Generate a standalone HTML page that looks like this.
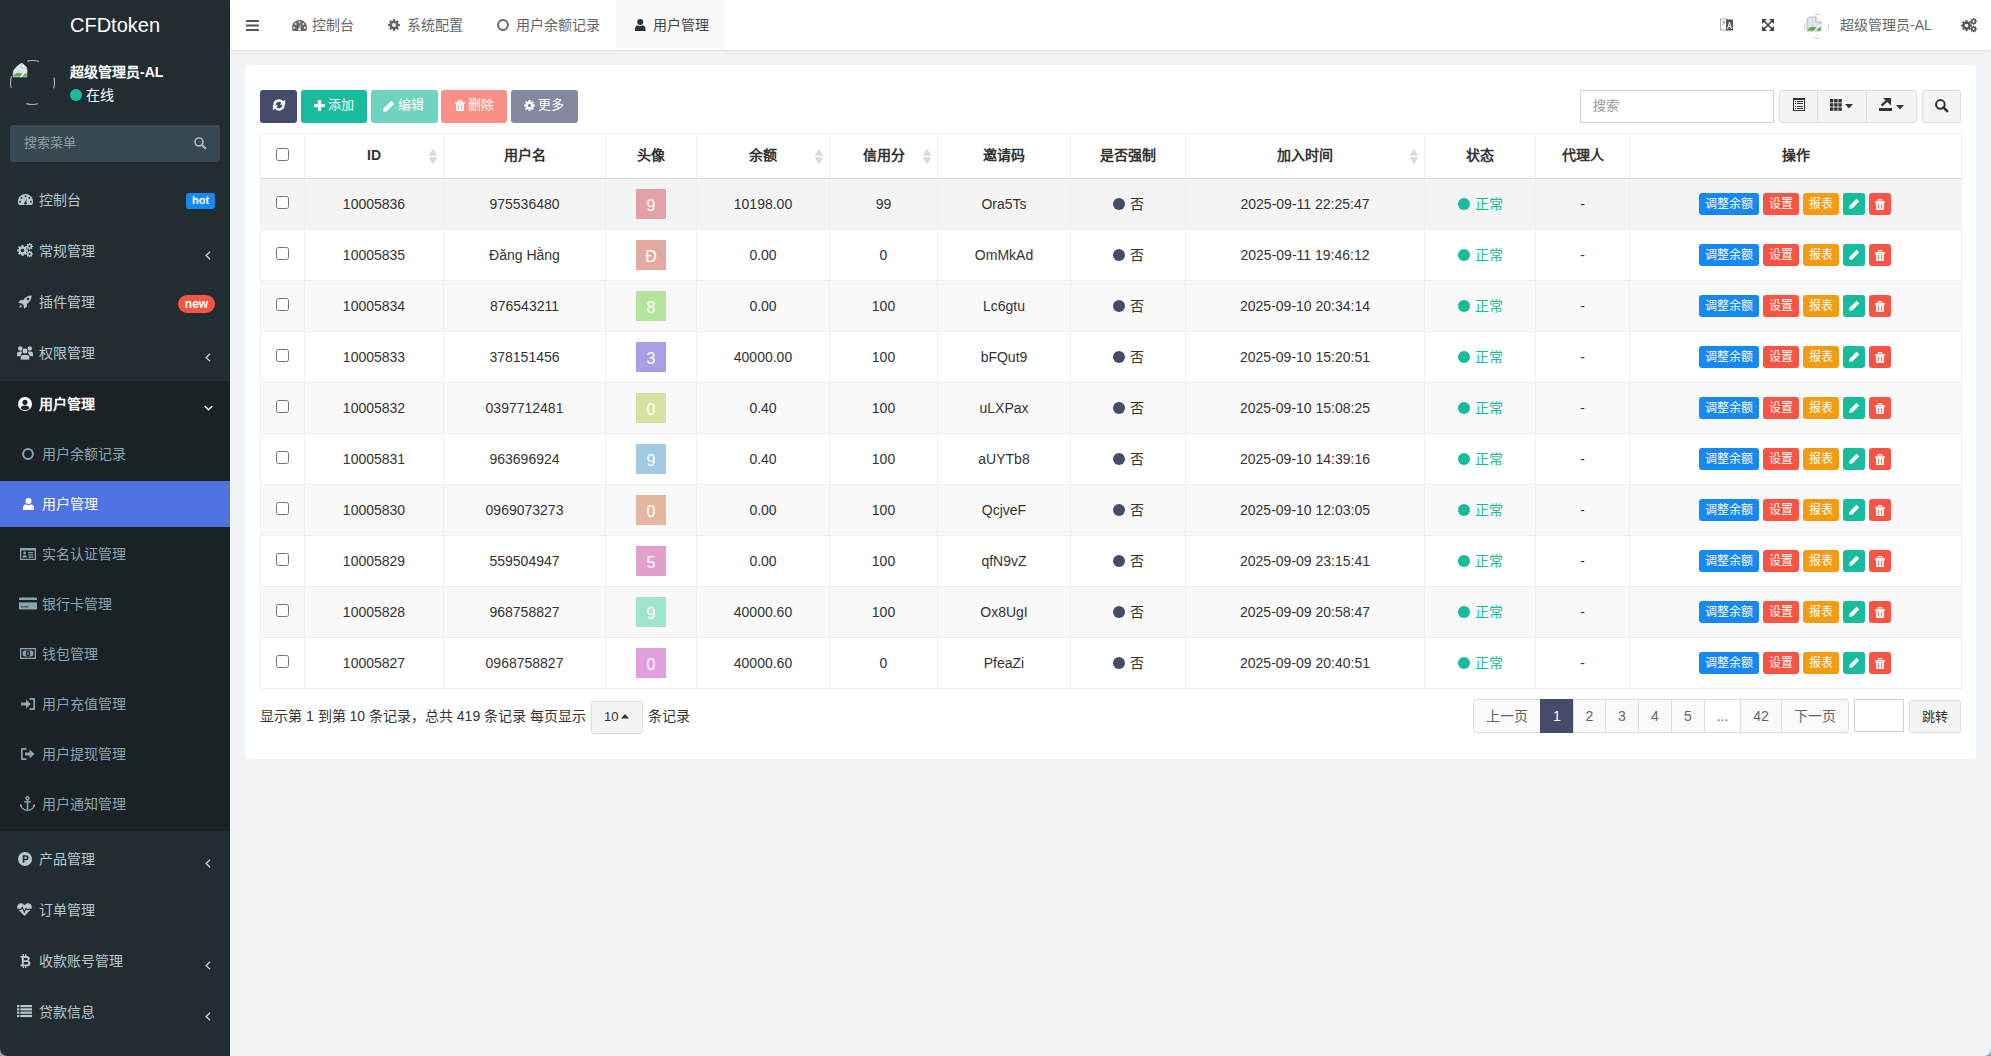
<!DOCTYPE html><html lang="zh-CN"><head><meta charset="utf-8"><title>CFDtoken</title><style>
*{box-sizing:border-box;margin:0;padding:0}
html{width:1991px;height:1056px;overflow:hidden;background:#8fa0b4}
body{position:relative;width:1991px;height:1056px;overflow:hidden;background:#f1f4f6;border-radius:0 0 7px 7px;font-family:"Liberation Sans",sans-serif;font-size:14px;color:#333}
.abs{position:absolute}
svg{display:block;overflow:visible}
#side{position:absolute;left:0;top:0;width:230px;height:1056px;background:#222d32;overflow:hidden}
.t{position:absolute;white-space:nowrap;line-height:20px;height:20px}
#nav{position:absolute;left:230px;top:0;width:1761px;height:50px;background:#fff;box-shadow:0 1px 2px rgba(0,0,0,.07)}
#panel{position:absolute;left:245px;top:65px;width:1731px;height:694px;background:#fff;border-radius:4px}
.btn{position:absolute;height:33px;border-radius:3px;color:#fff;font-size:13px;line-height:33px;white-space:nowrap}
table.tb{position:absolute;left:260px;top:133px;border-collapse:collapse;table-layout:fixed;width:1701px}
.tb th,.tb td{border:1px solid #f0f0f0;text-align:center;padding:0;white-space:nowrap;overflow:hidden;line-height:20px}
.tb th{height:45px;padding-bottom:2px;font-weight:bold;color:#333;border-bottom:1px solid #dcdcdc;position:relative}
.tb td{height:51px;color:#333}
.tb tr.odd td{background:#f9f9f9}
.tb tr.hov td{background:#f4f4f4}
.cb{display:inline-block;width:13px;height:13px;border:1px solid #767676;border-radius:2.5px;background:#fff;vertical-align:middle;position:relative;top:-3px}
.sort{position:absolute;right:6px;top:14.5px}
.av{display:inline-block;width:30px;height:30px;line-height:34px;color:#fff;font-family:"Liberation Sans",sans-serif;font-size:16px;vertical-align:middle}
.dot{display:inline-block;width:12px;height:12px;border-radius:6px;vertical-align:-1px;margin-right:5px}
.xb{position:absolute;top:0;height:22px;line-height:22px;border-radius:3px;color:#fff;font-size:12px;text-align:center}
.pg{position:absolute;top:699px;height:34px;border:1px solid #ddd;background:#fafafa;color:#666;line-height:32px;text-align:center;font-size:14px}
</style></head><body>
<div id="side">
<div class="abs" style="left:0;top:381px;width:230px;height:450px;background:#1a2226"></div>
<div class="abs" style="left:0;top:481px;width:230px;height:46px;background:#4e73df"></div>
<div class="t" style="left:0;top:15px;width:230px;text-align:center;color:#fff;font-size:20px;line-height:20px">CFDtoken</div>
<div class="abs" style="left:10px;top:60px;"><svg width="45" height="45" viewBox="0 0 45 45"><defs><clipPath id="cpa"><circle cx="22.5" cy="22.5" r="22.5"/></clipPath></defs><g clip-path="url(#cpa)"><g transform="translate(2,2)"><path d="M1,1 L10,1 L15,6 L15,15 L1,15 Z" fill="#dce5ef" stroke="#9aa5b1" stroke-width="0.7"/><path d="M1.4,14.6 C3,10.5 7,9.8 11,12.2 L12.6,10.6 L14.6,12 L14.6,14.6 Z" fill="#5aae45"/><path d="M15,8.5 L8.5,15" stroke="#fff" stroke-width="1.3"/><path d="M10,1 L10,6 L15,6" fill="#fff" stroke="#9aa5b1" stroke-width="0.7"/></g></g><circle cx="22.5" cy="22.5" r="22" fill="none" stroke="rgba(255,255,255,.65)" stroke-width="1.1" stroke-dasharray="12 22.56" stroke-dashoffset="6"/></svg></div>
<div class="t" style="left:70px;top:62px;color:#fff;font-weight:bold;font-size:14px">超级管理员-AL</div>
<div class="abs" style="left:70px;top:89px;"><div style="width:12px;height:12px;border-radius:6px;background:#18bc9c"></div></div>
<div class="t" style="left:86px;top:85px;color:#fff;font-size:14px">在线</div>
<div class="abs" style="left:10px;top:125px;width:210px;height:37px;background:#374850;border-radius:3px"></div>
<div class="t" style="left:24px;top:133px;color:#8f9ea5;font-size:13px">搜索菜单</div>
<div class="abs" style="left:194px;top:137px;"><svg width="12" height="12" viewBox="0 0 13 13" ><circle cx="5.4" cy="5.4" r="4.3" fill="none" stroke="#aab4b9" stroke-width="1.8"/><path d="M8.4,8.4 L12.2,12.2" stroke="#aab4b9" stroke-width="2.4" stroke-linecap="round"/></svg></div>
<div class="abs" style="left:18px;top:194.0px;"><svg width="15" height="11" viewBox="0 0 15 11" ><path d="M0.9,11 A7.5,7.5 0 1 1 14.1,11 Z" fill="#b8c7ce"/><circle cx="7.5" cy="2.2" r="0.95" fill="#222d32"/><circle cx="3.6" cy="3.9" r="0.95" fill="#222d32"/><circle cx="11.4" cy="3.9" r="0.95" fill="#222d32"/><circle cx="2.1" cy="7.7" r="0.95" fill="#222d32"/><circle cx="12.9" cy="7.7" r="0.95" fill="#222d32"/><path d="M8.9,3.6 L8.2,8.6 L6.9,8.4 Z" fill="#222d32"/><circle cx="7.5" cy="9.3" r="1.3" fill="#222d32"/></svg></div>
<div class="t" style="left:39px;top:189.5px;color:#b8c7ce;">控制台</div>
<div class="abs" style="left:186px;top:193px;width:29px;height:16px;border-radius:3px;background:#1688f1;color:#fff;font-size:11px;font-weight:bold;line-height:14px;text-align:center">hot</div>
<div class="abs" style="left:17px;top:243.2px;"><svg width="16" height="14.5" viewBox="0 0 16 14.5" ><path d="M9.45,6.39 L10.93,6.60 L10.93,8.40 L9.45,8.61 L9.29,9.07 L9.08,9.50 L9.97,10.70 L8.70,11.97 L7.50,11.08 L7.07,11.29 L6.61,11.45 L6.40,12.93 L4.60,12.93 L4.39,11.45 L3.93,11.29 L3.50,11.08 L2.30,11.97 L1.03,10.70 L1.92,9.50 L1.71,9.07 L1.55,8.61 L0.07,8.40 L0.07,6.60 L1.55,6.39 L1.71,5.93 L1.92,5.50 L1.03,4.30 L2.30,3.03 L3.50,3.92 L3.93,3.71 L4.39,3.55 L4.60,2.07 L6.40,2.07 L6.61,3.55 L7.07,3.71 L7.50,3.92 L8.70,3.03 L9.97,4.30 L9.08,5.50 L9.29,5.93 Z" fill="#b8c7ce"/><circle cx="5.5" cy="7.5" r="1.8" fill="#222d32"/><path d="M15.01,2.72 L15.95,2.84 L15.95,3.96 L15.01,4.08 L14.91,4.36 L14.78,4.62 L15.37,5.38 L14.58,6.17 L13.82,5.58 L13.56,5.71 L13.28,5.81 L13.16,6.75 L12.04,6.75 L11.92,5.81 L11.64,5.71 L11.38,5.58 L10.62,6.17 L9.83,5.38 L10.42,4.62 L10.29,4.36 L10.19,4.08 L9.25,3.96 L9.25,2.84 L10.19,2.72 L10.29,2.44 L10.42,2.18 L9.83,1.42 L10.62,0.63 L11.38,1.22 L11.64,1.09 L11.92,0.99 L12.04,0.05 L13.16,0.05 L13.28,0.99 L13.56,1.09 L13.82,1.22 L14.58,0.63 L15.37,1.42 L14.78,2.18 L14.91,2.44 Z" fill="#b8c7ce"/><circle cx="12.6" cy="3.4" r="1.1" fill="#222d32"/><path d="M15.01,10.32 L15.95,10.44 L15.95,11.56 L15.01,11.68 L14.91,11.96 L14.78,12.22 L15.37,12.98 L14.58,13.77 L13.82,13.18 L13.56,13.31 L13.28,13.41 L13.16,14.35 L12.04,14.35 L11.92,13.41 L11.64,13.31 L11.38,13.18 L10.62,13.77 L9.83,12.98 L10.42,12.22 L10.29,11.96 L10.19,11.68 L9.25,11.56 L9.25,10.44 L10.19,10.32 L10.29,10.04 L10.42,9.78 L9.83,9.02 L10.62,8.23 L11.38,8.82 L11.64,8.69 L11.92,8.59 L12.04,7.65 L13.16,7.65 L13.28,8.59 L13.56,8.69 L13.82,8.82 L14.58,8.23 L15.37,9.02 L14.78,9.78 L14.91,10.04 Z" fill="#b8c7ce"/><circle cx="12.6" cy="11.0" r="1.1" fill="#222d32"/></svg></div>
<div class="t" style="left:39px;top:240.5px;color:#b8c7ce;">常规管理</div>
<div class="abs" style="left:205px;top:251.3px;"><svg width="6" height="9" viewBox="0 0 6 9" ><path d="M5,0.8 L1.2,4.5 L5,8.2" fill="none" stroke="#b8c7ce" stroke-width="1.5"/></svg></div>
<div class="abs" style="left:18px;top:294.5px;"><svg width="14" height="14" viewBox="0 0 14 14" ><path d="M13.6,0.4 C10,0.3 7.2,2 5.2,5 L2.2,5.2 L0.3,8 L3.4,8.3 L5.7,10.6 L6,13.7 L8.8,11.8 L9,8.8 C12,6.8 13.7,4 13.6,0.4 Z" fill="#b8c7ce"/><circle cx="10" cy="4" r="1.3" fill="#222d32"/><path d="M2.6,9.8 L4.2,11.4 L1,13 Z" fill="#b8c7ce"/></svg></div>
<div class="t" style="left:39px;top:291.5px;color:#b8c7ce;">插件管理</div>
<div class="abs" style="left:178px;top:295px;width:37px;height:18px;border-radius:9px;background:#f75444;color:#fff;font-size:12px;font-weight:bold;line-height:18px;text-align:center">new</div>
<div class="abs" style="left:17px;top:345.5px;"><svg width="16" height="14" viewBox="0 0 16 14" ><circle cx="3.3" cy="2.5" r="2.3" fill="#b8c7ce"/><circle cx="12.7" cy="2.5" r="2.3" fill="#b8c7ce"/><path d="M0,10.2 L0,7.6 C0,6.2 1.2,5.4 3.2,5.4 L5.2,5.6 L3.6,10.2 Z" fill="#b8c7ce"/><path d="M16,10.2 L16,7.6 C16,6.2 14.8,5.4 12.8,5.4 L10.8,5.6 L12.4,10.2 Z" fill="#b8c7ce"/><path d="M3.2,14 L3.2,11 C3.2,9.2 4.8,8.4 8,8.4 C11.2,8.4 12.8,9.2 12.8,11 L12.8,14 Z" fill="#b8c7ce" stroke="#222d32" stroke-width="0.8"/><circle cx="8" cy="5" r="3" fill="#b8c7ce" stroke="#222d32" stroke-width="0.8"/></svg></div>
<div class="t" style="left:39px;top:342.5px;color:#b8c7ce;">权限管理</div>
<div class="abs" style="left:205px;top:353.3px;"><svg width="6" height="9" viewBox="0 0 6 9" ><path d="M5,0.8 L1.2,4.5 L5,8.2" fill="none" stroke="#b8c7ce" stroke-width="1.5"/></svg></div>
<div class="abs" style="left:18px;top:396.5px;"><svg width="14" height="14" viewBox="0 0 14 14" ><circle cx="7" cy="7" r="7" fill="#fff"/><circle cx="7" cy="5.3" r="2.6" fill="#1a2226"/><path d="M2.5,11.2 C3.2,9.3 5,8.6 7,8.6 C9,8.6 10.8,9.3 11.5,11.2 C10.4,12.5 8.8,13 7,13 C5.2,13 3.6,12.5 2.5,11.2 Z" fill="#1a2226"/></svg></div>
<div class="t" style="left:39px;top:393.5px;color:#fff;font-weight:bold;">用户管理</div>
<div class="abs" style="left:204px;top:404.5px;"><svg width="9" height="6" viewBox="0 0 9 6" ><path d="M0.8,1 L4.5,4.8 L8.2,1" fill="none" stroke="#fff" stroke-width="1.3"/></svg></div>
<div class="abs" style="left:22px;top:447.5px;"><svg width="12" height="12" viewBox="0 0 12 12" ><circle cx="6.0" cy="6.0" r="4.9" fill="none" stroke="#8aa4af" stroke-width="2"/></svg></div>
<div class="t" style="left:42px;top:443.5px;color:#8aa4af;">用户余额记录</div>
<div class="abs" style="left:23px;top:497.5px;"><svg width="11" height="12" viewBox="0 0 11 12" ><circle cx="5.5" cy="3" r="3" fill="#fff"/><path d="M0,12 L0,9.5 C0,7.5 1.5,6.5 3,6.3 C3.8,6.9 4.6,7.1 5.5,7.1 C6.4,7.1 7.2,6.9 8,6.3 C9.5,6.5 11,7.5 11,9.5 L11,12 Z" fill="#fff"/></svg></div>
<div class="t" style="left:42px;top:493.5px;color:#fff;">用户管理</div>
<div class="abs" style="left:20px;top:547.5px;"><svg width="16" height="12" viewBox="0 0 16 12" ><rect x="0" y="0" width="16" height="12" fill="#8aa4af"/><rect x="1.3" y="2.4" width="13.4" height="8.4" fill="#1a2226"/><circle cx="4.6" cy="5" r="1.4" fill="#8aa4af"/><path d="M2.4,9.6 C2.4,7.8 3.2,7.2 4.6,7.2 C6,7.2 6.8,7.8 6.8,9.6 Z" fill="#8aa4af"/><rect x="8.2" y="4" width="5" height="1.2" fill="#8aa4af"/><rect x="8.2" y="6.3" width="5" height="1.2" fill="#8aa4af"/><rect x="8.2" y="8.5" width="5" height="1.2" fill="#8aa4af"/></svg></div>
<div class="t" style="left:42px;top:543.5px;color:#8aa4af;">实名认证管理</div>
<div class="abs" style="left:19px;top:597.0px;"><svg width="18" height="13" viewBox="0 0 18 13" ><rect x="0" y="0.5" width="18" height="12" rx="1" fill="#8aa4af"/><rect x="0" y="3" width="18" height="2.4" fill="#1a2226"/><rect x="2" y="9.3" width="2.4" height="1" fill="#1a2226"/><rect x="5.3" y="9.3" width="3.6" height="1" fill="#1a2226"/></svg></div>
<div class="t" style="left:42px;top:593.5px;color:#8aa4af;">银行卡管理</div>
<div class="abs" style="left:20px;top:648.0px;"><svg width="16" height="11" viewBox="0 0 16 11" ><rect x="0" y="0" width="16" height="11" fill="#8aa4af"/><rect x="1.3" y="1.3" width="13.4" height="8.4" fill="#1a2226"/><rect x="2.6" y="2.4" width="10.8" height="6.2" rx="2.5" fill="#8aa4af"/><ellipse cx="8" cy="5.5" rx="2.2" ry="2.9" fill="#1a2226"/><rect x="7.5" y="3.8" width="1" height="3.4" fill="#8aa4af"/></svg></div>
<div class="t" style="left:42px;top:643.5px;color:#8aa4af;">钱包管理</div>
<div class="abs" style="left:21px;top:697.5px;"><svg width="14" height="12" viewBox="0 0 14 12" ><path d="M0,4.5 L5,4.5 L5,1.5 L9.8,6 L5,10.5 L5,7.5 L0,7.5 Z" fill="#8aa4af"/><path d="M8.5,0 L13,0 C13.6,0 14,0.4 14,1 L14,11 C14,11.6 13.6,12 13,12 L8.5,12 L8.5,10.3 L12.3,10.3 L12.3,1.7 L8.5,1.7 Z" fill="#8aa4af"/></svg></div>
<div class="t" style="left:42px;top:693.5px;color:#8aa4af;">用户充值管理</div>
<div class="abs" style="left:21px;top:747.5px;"><svg width="14" height="12" viewBox="0 0 14 12" ><path d="M5.5,0 L1,0 C0.4,0 0,0.4 0,1 L0,11 C0,11.6 0.4,12 1,12 L5.5,12 L5.5,10.3 L1.7,10.3 L1.7,1.7 L5.5,1.7 Z" fill="#8aa4af"/><path d="M4,4.5 L8.6,4.5 L8.6,1.5 L13.6,6 L8.6,10.5 L8.6,7.5 L4,7.5 Z" fill="#8aa4af"/></svg></div>
<div class="t" style="left:42px;top:743.5px;color:#8aa4af;">用户提现管理</div>
<div class="abs" style="left:20px;top:796.0px;"><svg width="15" height="15" viewBox="0 0 15 15" ><circle cx="7.5" cy="2.2" r="1.5" fill="none" stroke="#8aa4af" stroke-width="1.4"/><rect x="6.8" y="3.6" width="1.5" height="10" fill="#8aa4af"/><rect x="4.2" y="5.2" width="6.6" height="1.4" fill="#8aa4af"/><path d="M0.7,8.6 C1,12 4,14.3 7.5,14.3 C11,14.3 14,12 14.3,8.6" fill="none" stroke="#8aa4af" stroke-width="1.5"/><path d="M0,8 L2.6,9.8 L0.2,11 Z" fill="#8aa4af"/><path d="M15,8 L12.4,9.8 L14.8,11 Z" fill="#8aa4af"/></svg></div>
<div class="t" style="left:42px;top:793.5px;color:#8aa4af;">用户通知管理</div>
<div class="abs" style="left:18px;top:851.5px;"><svg width="14" height="14" viewBox="0 0 14 14" ><circle cx="7" cy="7" r="7" fill="#b8c7ce"/><path d="M4.7,3.3 L8,3.3 C9.7,3.3 10.6,4.4 10.6,5.8 C10.6,7.2 9.7,8.3 8,8.3 L6.4,8.3 L6.4,10.8 L4.7,10.8 Z M6.4,4.8 L6.4,6.8 L7.9,6.8 C8.5,6.8 8.9,6.4 8.9,5.8 C8.9,5.2 8.5,4.8 7.9,4.8 Z" fill="#222d32"/></svg></div>
<div class="t" style="left:39px;top:848.5px;color:#b8c7ce;">产品管理</div>
<div class="abs" style="left:205px;top:859.3px;"><svg width="6" height="9" viewBox="0 0 6 9" ><path d="M5,0.8 L1.2,4.5 L5,8.2" fill="none" stroke="#b8c7ce" stroke-width="1.5"/></svg></div>
<div class="abs" style="left:17px;top:903.0px;"><svg width="15" height="13" viewBox="0 0 15 13" ><path d="M7.5,13 L1.2,6.6 C-0.6,4.6 0,1.2 2.8,0.4 C4.6,-0.1 6.4,0.8 7.5,2.2 C8.6,0.8 10.4,-0.1 12.2,0.4 C15,1.2 15.6,4.6 13.8,6.6 Z" fill="#b8c7ce"/><path d="M0.5,6.4 L4,6.4 L5.3,4.4 L7.3,9 L9,5.4 L10,6.4 L14.5,6.4" fill="none" stroke="#222d32" stroke-width="1.1"/></svg></div>
<div class="t" style="left:39px;top:899.5px;color:#b8c7ce;">订单管理</div>
<div class="abs" style="left:20px;top:953.5px;"><svg width="11" height="14" viewBox="0 0 11 14" ><path d="M0.5,2 L6.5,2 C8.6,2 9.8,3 9.8,4.6 C9.8,5.7 9.2,6.4 8.3,6.8 C9.6,7.1 10.5,8 10.5,9.4 C10.5,11.2 9.2,12.3 6.8,12.3 L0.5,12.3 L0.5,10.5 L1.8,10.5 L1.8,3.8 L0.5,3.8 Z M3.8,3.9 L3.8,6.2 L6.2,6.2 C7.1,6.2 7.7,5.8 7.7,5 C7.7,4.3 7.1,3.9 6.2,3.9 Z M3.8,7.9 L3.8,10.4 L6.5,10.4 C7.6,10.4 8.2,9.9 8.2,9.1 C8.2,8.3 7.6,7.9 6.5,7.9 Z" fill="#b8c7ce"/><rect x="2.6" y="0" width="1.3" height="2.2" fill="#b8c7ce"/><rect x="5.1" y="0" width="1.3" height="2.2" fill="#b8c7ce"/><rect x="2.6" y="12" width="1.3" height="2" fill="#b8c7ce"/><rect x="5.1" y="12" width="1.3" height="2" fill="#b8c7ce"/></svg></div>
<div class="t" style="left:39px;top:950.5px;color:#b8c7ce;">收款账号管理</div>
<div class="abs" style="left:205px;top:961.3px;"><svg width="6" height="9" viewBox="0 0 6 9" ><path d="M5,0.8 L1.2,4.5 L5,8.2" fill="none" stroke="#b8c7ce" stroke-width="1.5"/></svg></div>
<div class="abs" style="left:17px;top:1005.4px;"><svg width="15" height="12.2" viewBox="0 0 15 12.2" ><rect x="0" y="0" width="2.4" height="2.2" fill="#b8c7ce"/><rect x="3.4" y="0" width="11.6" height="2.2" fill="#b8c7ce"/><rect x="0" y="3.3" width="2.4" height="2.2" fill="#b8c7ce"/><rect x="3.4" y="3.3" width="11.6" height="2.2" fill="#b8c7ce"/><rect x="0" y="6.6" width="2.4" height="2.2" fill="#b8c7ce"/><rect x="3.4" y="6.6" width="11.6" height="2.2" fill="#b8c7ce"/><rect x="0" y="9.9" width="2.4" height="2.2" fill="#b8c7ce"/><rect x="3.4" y="9.9" width="11.6" height="2.2" fill="#b8c7ce"/></svg></div>
<div class="t" style="left:39px;top:1001.5px;color:#b8c7ce;">贷款信息</div>
<div class="abs" style="left:205px;top:1012.3px;"><svg width="6" height="9" viewBox="0 0 6 9" ><path d="M5,0.8 L1.2,4.5 L5,8.2" fill="none" stroke="#b8c7ce" stroke-width="1.5"/></svg></div>
</div>
<div id="nav"></div>
<div class="abs" style="left:616px;top:0;width:109px;height:50px;background:#f9f9f9"></div>
<div class="abs" style="left:246px;top:20px;"><svg width="13" height="11" viewBox="0 0 13 11" ><rect x="0" y="0" width="13" height="2" rx="0.5" fill="#555"/><rect x="0" y="4.5" width="13" height="2" rx="0.5" fill="#555"/><rect x="0" y="9" width="13" height="2" rx="0.5" fill="#555"/></svg></div>
<div class="abs" style="left:292px;top:19.8px;"><svg width="15" height="11" viewBox="0 0 15 11" ><path d="M0.9,11 A7.5,7.5 0 1 1 14.1,11 Z" fill="#666"/><circle cx="7.5" cy="2.2" r="0.95" fill="#fff"/><circle cx="3.6" cy="3.9" r="0.95" fill="#fff"/><circle cx="11.4" cy="3.9" r="0.95" fill="#fff"/><circle cx="2.1" cy="7.7" r="0.95" fill="#fff"/><circle cx="12.9" cy="7.7" r="0.95" fill="#fff"/><path d="M8.9,3.6 L8.2,8.6 L6.9,8.4 Z" fill="#fff"/><circle cx="7.5" cy="9.3" r="1.3" fill="#fff"/></svg></div>
<div class="t" style="left:312px;top:15px;color:#666">控制台</div>
<div class="abs" style="left:388px;top:19px;"><svg width="12" height="12" viewBox="0 0 12 12" ><path d="M10.23,4.81 L11.92,5.01 L11.92,6.99 L10.23,7.19 L10.07,7.68 L9.84,8.15 L10.88,9.49 L9.49,10.88 L8.15,9.84 L7.68,10.07 L7.19,10.23 L6.99,11.92 L5.01,11.92 L4.81,10.23 L4.32,10.07 L3.85,9.84 L2.51,10.88 L1.12,9.49 L2.16,8.15 L1.93,7.68 L1.77,7.19 L0.08,6.99 L0.08,5.01 L1.77,4.81 L1.93,4.32 L2.16,3.85 L1.12,2.51 L2.51,1.12 L3.85,2.16 L4.32,1.93 L4.81,1.77 L5.01,0.08 L6.99,0.08 L7.19,1.77 L7.68,1.93 L8.15,2.16 L9.49,1.12 L10.88,2.51 L9.84,3.85 L10.07,4.32 Z" fill="#666"/><circle cx="6" cy="6" r="1.9" fill="#fff"/></svg></div>
<div class="t" style="left:407px;top:15px;color:#666">系统配置</div>
<div class="abs" style="left:497px;top:19px;"><svg width="12" height="12" viewBox="0 0 12 12" ><circle cx="6.0" cy="6.0" r="4.9" fill="none" stroke="#666" stroke-width="2"/></svg></div>
<div class="t" style="left:516px;top:15px;color:#666">用户余额记录</div>
<div class="abs" style="left:635px;top:19px;"><svg width="10.5" height="12" viewBox="0 0 10.5 12" ><circle cx="5.25" cy="3" r="3" fill="#333"/><path d="M0,12 L0,9.5 C0,7.5 1.5,6.5 3,6.3 C3.7,6.9 4.4,7.1 5.25,7.1 C6.1,7.1 6.8,6.9 7.5,6.3 C9,6.5 10.5,7.5 10.5,9.5 L10.5,12 Z" fill="#333"/></svg></div>
<div class="t" style="left:653px;top:15px;color:#444">用户管理</div>
<div class="abs" style="left:1720px;top:18px;"><svg width="13" height="13" viewBox="0 0 13 13" ><rect x="0.5" y="1" width="6.5" height="11" fill="#fff" stroke="#999" stroke-width="0.8"/><path d="M2,4 L5,4 M3.5,3 L3.5,4 M2.2,7 L5,4.5" stroke="#777" stroke-width="0.8" fill="none"/><rect x="6" y="1.5" width="7" height="11" fill="#555"/><path d="M7.5,11 L9.5,4 L11.5,11 M8.3,8.5 L10.7,8.5" stroke="#fff" stroke-width="1" fill="none"/></svg></div>
<div class="abs" style="left:1762px;top:19px;"><svg width="12" height="12" viewBox="0 0 12 12" ><path d="M0,0 L5,0 L0,5 Z M12,0 L7,0 L12,5 Z M0,12 L5,12 L0,7 Z M12,12 L7,12 L12,7 Z" fill="#444"/><path d="M1.5,1.5 L10.5,10.5 M10.5,1.5 L1.5,10.5" stroke="#444" stroke-width="1.7"/></svg></div>
<div class="abs" style="left:1804px;top:14px;"><svg width="25" height="25" viewBox="0 0 25 25"><defs><clipPath id="cpb"><circle cx="12.5" cy="12.5" r="12.5"/></clipPath></defs><g clip-path="url(#cpb)"><g transform="translate(2,2)"><path d="M1,1 L10,1 L15,6 L15,15 L1,15 Z" fill="#dce5ef" stroke="#9aa5b1" stroke-width="0.7"/><path d="M1.4,14.6 C3,10.5 7,9.8 11,12.2 L12.6,10.6 L14.6,12 L14.6,14.6 Z" fill="#5aae45"/><path d="M15,8.5 L8.5,15" stroke="#fff" stroke-width="1.3"/><path d="M10,1 L10,6 L15,6" fill="#fff" stroke="#9aa5b1" stroke-width="0.7"/></g></g><circle cx="12.5" cy="12.5" r="12" fill="none" stroke="#c8c8c8" stroke-width="1" stroke-dasharray="6 12.85" stroke-dashoffset="3"/></svg></div>
<div class="t" style="left:1840px;top:15px;color:#666">超级管理员-AL</div>
<div class="abs" style="left:1961px;top:18px;"><svg width="16" height="14.5" viewBox="0 0 16 14.5" ><path d="M9.45,6.39 L10.93,6.60 L10.93,8.40 L9.45,8.61 L9.29,9.07 L9.08,9.50 L9.97,10.70 L8.70,11.97 L7.50,11.08 L7.07,11.29 L6.61,11.45 L6.40,12.93 L4.60,12.93 L4.39,11.45 L3.93,11.29 L3.50,11.08 L2.30,11.97 L1.03,10.70 L1.92,9.50 L1.71,9.07 L1.55,8.61 L0.07,8.40 L0.07,6.60 L1.55,6.39 L1.71,5.93 L1.92,5.50 L1.03,4.30 L2.30,3.03 L3.50,3.92 L3.93,3.71 L4.39,3.55 L4.60,2.07 L6.40,2.07 L6.61,3.55 L7.07,3.71 L7.50,3.92 L8.70,3.03 L9.97,4.30 L9.08,5.50 L9.29,5.93 Z" fill="#555"/><circle cx="5.5" cy="7.5" r="1.8" fill="#fff"/><path d="M15.01,2.72 L15.95,2.84 L15.95,3.96 L15.01,4.08 L14.91,4.36 L14.78,4.62 L15.37,5.38 L14.58,6.17 L13.82,5.58 L13.56,5.71 L13.28,5.81 L13.16,6.75 L12.04,6.75 L11.92,5.81 L11.64,5.71 L11.38,5.58 L10.62,6.17 L9.83,5.38 L10.42,4.62 L10.29,4.36 L10.19,4.08 L9.25,3.96 L9.25,2.84 L10.19,2.72 L10.29,2.44 L10.42,2.18 L9.83,1.42 L10.62,0.63 L11.38,1.22 L11.64,1.09 L11.92,0.99 L12.04,0.05 L13.16,0.05 L13.28,0.99 L13.56,1.09 L13.82,1.22 L14.58,0.63 L15.37,1.42 L14.78,2.18 L14.91,2.44 Z" fill="#555"/><circle cx="12.6" cy="3.4" r="1.1" fill="#fff"/><path d="M15.01,10.32 L15.95,10.44 L15.95,11.56 L15.01,11.68 L14.91,11.96 L14.78,12.22 L15.37,12.98 L14.58,13.77 L13.82,13.18 L13.56,13.31 L13.28,13.41 L13.16,14.35 L12.04,14.35 L11.92,13.41 L11.64,13.31 L11.38,13.18 L10.62,13.77 L9.83,12.98 L10.42,12.22 L10.29,11.96 L10.19,11.68 L9.25,11.56 L9.25,10.44 L10.19,10.32 L10.29,10.04 L10.42,9.78 L9.83,9.02 L10.62,8.23 L11.38,8.82 L11.64,8.69 L11.92,8.59 L12.04,7.65 L13.16,7.65 L13.28,8.59 L13.56,8.69 L13.82,8.82 L14.58,8.23 L15.37,9.02 L14.78,9.78 L14.91,10.04 Z" fill="#555"/><circle cx="12.6" cy="11.0" r="1.1" fill="#fff"/></svg></div>
<div id="panel"></div>
<div class="btn" style="left:260px;top:90px;width:37px;background:#444c69"><div class="abs" style="left:12.5px;top:9px;"><svg width="12" height="12" viewBox="0 0 12 12" ><path d="M1.5,6.2 A4.5,4.5 0 0 1 9.9,3.8" fill="none" stroke="#fff" stroke-width="2.3"/><path d="M12.1,0.6 L12.1,5.8 L6.9,5.8 Z" fill="#fff"/><path d="M10.5,5.8 A4.5,4.5 0 0 1 2.1,8.2" fill="none" stroke="#fff" stroke-width="2.3"/><path d="M-0.1,11.4 L-0.1,6.2 L5.1,6.2 Z" fill="#fff"/></svg></div></div>
<div class="btn" style="left:301px;top:90px;width:66px;background:#18bc9c"><div class="abs" style="left:13px;top:9.8px;"><svg width="11" height="11" viewBox="0 0 11 11" ><rect x="3.9" y="0" width="3.2" height="11" fill="#fff"/><rect x="0" y="3.9" width="11" height="3.2" fill="#fff"/></svg></div><span class="t" style="left:27px;top:5.3px;font-size:13px">添加</span></div>
<div class="btn" style="left:371px;top:90px;width:67px;background:#6ed4bf"><div class="abs" style="left:12px;top:9.8px;"><svg width="12" height="12" viewBox="0 0 12 12" ><path d="M0.2,11.8 L0.6,8.4 L8.2,0.8 L11.2,3.8 L3.6,11.4 Z" fill="#fff"/></svg></div><span class="t" style="left:27px;top:5.3px;font-size:13px">编辑</span></div>
<div class="btn" style="left:441px;top:90px;width:66px;background:#f98f85"><div class="abs" style="left:13.5px;top:9.5px;"><svg width="10" height="11" viewBox="0 0 10 11" ><rect x="0" y="2.2" width="10" height="1.5" fill="#fff"/><path d="M3,2.4 L3.4,0.6 L6.6,0.6 L7,2.4" fill="none" stroke="#fff" stroke-width="1.1"/><path d="M0.9,3.5 L9.1,3.5 L8.8,11 L1.2,11 Z" fill="#fff"/><rect x="3" y="4.7" width="0.8" height="5.2" fill="#f98f85"/><rect x="6.2" y="4.7" width="0.8" height="5.2" fill="#f98f85"/></svg></div><span class="t" style="left:27px;top:5.3px;font-size:13px">删除</span></div>
<div class="btn" style="left:511px;top:90px;width:67px;background:#8489a0"><div class="abs" style="left:13px;top:10px;"><svg width="11" height="11" viewBox="0 0 11 11" ><path d="M9.35,4.41 L10.93,4.60 L10.93,6.40 L9.35,6.59 L9.20,7.03 L8.99,7.45 L9.97,8.70 L8.70,9.97 L7.45,8.99 L7.03,9.20 L6.59,9.35 L6.40,10.93 L4.60,10.93 L4.41,9.35 L3.97,9.20 L3.55,8.99 L2.30,9.97 L1.03,8.70 L2.01,7.45 L1.80,7.03 L1.65,6.59 L0.07,6.40 L0.07,4.60 L1.65,4.41 L1.80,3.97 L2.01,3.55 L1.03,2.30 L2.30,1.03 L3.55,2.01 L3.97,1.80 L4.41,1.65 L4.60,0.07 L6.40,0.07 L6.59,1.65 L7.03,1.80 L7.45,2.01 L8.70,1.03 L9.97,2.30 L8.99,3.55 L9.20,3.97 Z" fill="#fff"/><circle cx="5.5" cy="5.5" r="1.7" fill="#8489a0"/></svg></div><span class="t" style="left:27px;top:5.3px;font-size:13px">更多</span></div>
<div class="abs" style="left:1580px;top:90px;width:194px;height:33px;border:1px solid #ccd3dd;background:#fff"></div>
<div class="t" style="left:1593px;top:96px;color:#999;font-size:13px">搜索</div>
<div class="abs" style="left:1779px;top:90px;width:138px;height:33px;border:1px solid #ddd;border-radius:3px;background:#f4f4f4"></div>
<div class="abs" style="left:1817px;top:90px;width:1px;height:33px;background:#ddd"></div>
<div class="abs" style="left:1866px;top:90px;width:1px;height:33px;background:#ddd"></div>
<div class="abs" style="left:1922px;top:90px;width:39px;height:33px;border:1px solid #ddd;border-radius:3px;background:#f4f4f4"></div>
<div class="abs" style="left:1793px;top:98px;"><svg width="12" height="13" viewBox="0 0 12 13" ><rect x="0.5" y="0.5" width="11" height="12" fill="none" stroke="#333" stroke-width="1"/><rect x="0" y="0" width="12" height="2" fill="#333"/><rect x="2" y="3" width="1" height="1" fill="#333"/><rect x="4" y="3" width="6" height="1" fill="#333"/><rect x="2" y="5" width="1" height="1" fill="#333"/><rect x="4" y="5" width="6" height="1" fill="#333"/><rect x="2" y="8" width="1" height="1" fill="#333"/><rect x="4" y="8" width="6" height="1" fill="#333"/><rect x="2" y="10" width="1" height="1" fill="#333"/><rect x="4" y="10" width="6" height="1" fill="#333"/></svg></div>
<div class="abs" style="left:1830px;top:99px;"><svg width="12" height="12" viewBox="0 0 12 12" ><rect x="0" y="0" width="3.4" height="3.4" fill="#333"/><rect x="0" y="4.2" width="3.4" height="3.4" fill="#333"/><rect x="0" y="8.4" width="3.4" height="3.4" fill="#333"/><rect x="4.2" y="0" width="3.4" height="3.4" fill="#333"/><rect x="4.2" y="4.2" width="3.4" height="3.4" fill="#333"/><rect x="4.2" y="8.4" width="3.4" height="3.4" fill="#333"/><rect x="8.4" y="0" width="3.4" height="3.4" fill="#333"/><rect x="8.4" y="4.2" width="3.4" height="3.4" fill="#333"/><rect x="8.4" y="8.4" width="3.4" height="3.4" fill="#333"/></svg></div>
<div class="abs" style="left:1845px;top:104px;"><svg width="9" height="5" viewBox="0 0 9 5" ><path d="M0,0 L8,0 L4,4.5 Z" fill="#333"/></svg></div>
<div class="abs" style="left:1879px;top:98px;"><svg width="13" height="13" viewBox="0 0 13 13" ><rect x="0" y="10" width="13" height="3" fill="#333"/><path d="M4,0 L12,0 L12,7.5 Z" fill="#333"/><path d="M2.6,7.6 L9,1.6" stroke="#333" stroke-width="2.2"/></svg></div>
<div class="abs" style="left:1896px;top:105px;"><svg width="9" height="5" viewBox="0 0 9 5" ><path d="M0,0 L8,0 L4,4.5 Z" fill="#333"/></svg></div>
<div class="abs" style="left:1935px;top:99px;"><svg width="13" height="13" viewBox="0 0 13 13" ><circle cx="5.4" cy="5.4" r="4.3" fill="none" stroke="#333" stroke-width="2"/><path d="M8.4,8.4 L12.2,12.2" stroke="#333" stroke-width="2.6" stroke-linecap="round"/></svg></div>
<table class="tb"><colgroup><col style="width:44px"><col style="width:139px"><col style="width:162px"><col style="width:91px"><col style="width:133px"><col style="width:108px"><col style="width:133px"><col style="width:115px"><col style="width:239px"><col style="width:111px"><col style="width:94px"><col style="width:332px"></colgroup>
<tr><th><span class="cb" style="top:-2px"></span></th><th>ID<div class="sort"><svg width="8" height="15" viewBox="0 0 8 15" ><path d="M4,-0.3 L8.3,6.8 L-0.3,6.8 Z" fill="#dadada"/><path d="M-0.3,8.2 L8.3,8.2 L4,15.3 Z" fill="#dadada"/></svg></div></th><th>用户名</th><th>头像</th><th>余额<div class="sort"><svg width="8" height="15" viewBox="0 0 8 15" ><path d="M4,-0.3 L8.3,6.8 L-0.3,6.8 Z" fill="#dadada"/><path d="M-0.3,8.2 L8.3,8.2 L4,15.3 Z" fill="#dadada"/></svg></div></th><th>信用分<div class="sort"><svg width="8" height="15" viewBox="0 0 8 15" ><path d="M4,-0.3 L8.3,6.8 L-0.3,6.8 Z" fill="#dadada"/><path d="M-0.3,8.2 L8.3,8.2 L4,15.3 Z" fill="#dadada"/></svg></div></th><th>邀请码</th><th>是否强制</th><th>加入时间<div class="sort"><svg width="8" height="15" viewBox="0 0 8 15" ><path d="M4,-0.3 L8.3,6.8 L-0.3,6.8 Z" fill="#dadada"/><path d="M-0.3,8.2 L8.3,8.2 L4,15.3 Z" fill="#dadada"/></svg></div></th><th>状态</th><th>代理人</th><th>操作</th></tr>
<tr class="hov"><td><span class="cb"></span></td><td>10005836</td><td>975536480</td><td><span class="av" style="background:#e4a0a6">9</span></td><td>10198.00</td><td>99</td><td>Ora5Ts</td><td><span class="dot" style="background:#444c69"></span>否</td><td>2025-09-11 22:25:47</td><td><span class="dot" style="background:#18bc9c"></span><span style="color:#18bc9c">正常</span></td><td>-</td><td><div style="position:relative;height:22px;width:192px;margin-left:69px"><div class="xb" style="left:0;width:60px;background:#1688f1">调整余额</div><div class="xb" style="left:64px;width:36px;background:#f75444">设置</div><div class="xb" style="left:104px;width:36px;background:#f39c12">报表</div><div class="xb" style="left:144px;width:22px;background:#18bc9c"><div class="abs" style="left:5.5px;top:5.3px;"><svg width="11" height="11" viewBox="0 0 12 12" ><path d="M0.2,11.8 L0.6,8.4 L8.2,0.8 L11.2,3.8 L3.6,11.4 Z" fill="#fff"/></svg></div></div><div class="xb" style="left:170px;width:22px;background:#f75444"><div class="abs" style="left:6px;top:5.5px;"><svg width="10" height="11" viewBox="0 0 10 11" ><rect x="0" y="2.2" width="10" height="1.5" fill="#fff"/><path d="M3,2.4 L3.4,0.6 L6.6,0.6 L7,2.4" fill="none" stroke="#fff" stroke-width="1.1"/><path d="M0.9,3.5 L9.1,3.5 L8.8,11 L1.2,11 Z" fill="#fff"/><rect x="3" y="4.7" width="0.8" height="5.2" fill="#f75444"/><rect x="6.2" y="4.7" width="0.8" height="5.2" fill="#f75444"/></svg></div></div></div></td></tr>
<tr class=""><td><span class="cb"></span></td><td>10005835</td><td>Đăng Hằng</td><td><span class="av" style="background:#e3aa9f">Đ</span></td><td>0.00</td><td>0</td><td>OmMkAd</td><td><span class="dot" style="background:#444c69"></span>否</td><td>2025-09-11 19:46:12</td><td><span class="dot" style="background:#18bc9c"></span><span style="color:#18bc9c">正常</span></td><td>-</td><td><div style="position:relative;height:22px;width:192px;margin-left:69px"><div class="xb" style="left:0;width:60px;background:#1688f1">调整余额</div><div class="xb" style="left:64px;width:36px;background:#f75444">设置</div><div class="xb" style="left:104px;width:36px;background:#f39c12">报表</div><div class="xb" style="left:144px;width:22px;background:#18bc9c"><div class="abs" style="left:5.5px;top:5.3px;"><svg width="11" height="11" viewBox="0 0 12 12" ><path d="M0.2,11.8 L0.6,8.4 L8.2,0.8 L11.2,3.8 L3.6,11.4 Z" fill="#fff"/></svg></div></div><div class="xb" style="left:170px;width:22px;background:#f75444"><div class="abs" style="left:6px;top:5.5px;"><svg width="10" height="11" viewBox="0 0 10 11" ><rect x="0" y="2.2" width="10" height="1.5" fill="#fff"/><path d="M3,2.4 L3.4,0.6 L6.6,0.6 L7,2.4" fill="none" stroke="#fff" stroke-width="1.1"/><path d="M0.9,3.5 L9.1,3.5 L8.8,11 L1.2,11 Z" fill="#fff"/><rect x="3" y="4.7" width="0.8" height="5.2" fill="#f75444"/><rect x="6.2" y="4.7" width="0.8" height="5.2" fill="#f75444"/></svg></div></div></div></td></tr>
<tr class="odd"><td><span class="cb"></span></td><td>10005834</td><td>876543211</td><td><span class="av" style="background:#b5e3a0">8</span></td><td>0.00</td><td>100</td><td>Lc6gtu</td><td><span class="dot" style="background:#444c69"></span>否</td><td>2025-09-10 20:34:14</td><td><span class="dot" style="background:#18bc9c"></span><span style="color:#18bc9c">正常</span></td><td>-</td><td><div style="position:relative;height:22px;width:192px;margin-left:69px"><div class="xb" style="left:0;width:60px;background:#1688f1">调整余额</div><div class="xb" style="left:64px;width:36px;background:#f75444">设置</div><div class="xb" style="left:104px;width:36px;background:#f39c12">报表</div><div class="xb" style="left:144px;width:22px;background:#18bc9c"><div class="abs" style="left:5.5px;top:5.3px;"><svg width="11" height="11" viewBox="0 0 12 12" ><path d="M0.2,11.8 L0.6,8.4 L8.2,0.8 L11.2,3.8 L3.6,11.4 Z" fill="#fff"/></svg></div></div><div class="xb" style="left:170px;width:22px;background:#f75444"><div class="abs" style="left:6px;top:5.5px;"><svg width="10" height="11" viewBox="0 0 10 11" ><rect x="0" y="2.2" width="10" height="1.5" fill="#fff"/><path d="M3,2.4 L3.4,0.6 L6.6,0.6 L7,2.4" fill="none" stroke="#fff" stroke-width="1.1"/><path d="M0.9,3.5 L9.1,3.5 L8.8,11 L1.2,11 Z" fill="#fff"/><rect x="3" y="4.7" width="0.8" height="5.2" fill="#f75444"/><rect x="6.2" y="4.7" width="0.8" height="5.2" fill="#f75444"/></svg></div></div></div></td></tr>
<tr class=""><td><span class="cb"></span></td><td>10005833</td><td>378151456</td><td><span class="av" style="background:#a9a0e3">3</span></td><td>40000.00</td><td>100</td><td>bFQut9</td><td><span class="dot" style="background:#444c69"></span>否</td><td>2025-09-10 15:20:51</td><td><span class="dot" style="background:#18bc9c"></span><span style="color:#18bc9c">正常</span></td><td>-</td><td><div style="position:relative;height:22px;width:192px;margin-left:69px"><div class="xb" style="left:0;width:60px;background:#1688f1">调整余额</div><div class="xb" style="left:64px;width:36px;background:#f75444">设置</div><div class="xb" style="left:104px;width:36px;background:#f39c12">报表</div><div class="xb" style="left:144px;width:22px;background:#18bc9c"><div class="abs" style="left:5.5px;top:5.3px;"><svg width="11" height="11" viewBox="0 0 12 12" ><path d="M0.2,11.8 L0.6,8.4 L8.2,0.8 L11.2,3.8 L3.6,11.4 Z" fill="#fff"/></svg></div></div><div class="xb" style="left:170px;width:22px;background:#f75444"><div class="abs" style="left:6px;top:5.5px;"><svg width="10" height="11" viewBox="0 0 10 11" ><rect x="0" y="2.2" width="10" height="1.5" fill="#fff"/><path d="M3,2.4 L3.4,0.6 L6.6,0.6 L7,2.4" fill="none" stroke="#fff" stroke-width="1.1"/><path d="M0.9,3.5 L9.1,3.5 L8.8,11 L1.2,11 Z" fill="#fff"/><rect x="3" y="4.7" width="0.8" height="5.2" fill="#f75444"/><rect x="6.2" y="4.7" width="0.8" height="5.2" fill="#f75444"/></svg></div></div></div></td></tr>
<tr class="odd"><td><span class="cb"></span></td><td>10005832</td><td>0397712481</td><td><span class="av" style="background:#d6e3a0">0</span></td><td>0.40</td><td>100</td><td>uLXPax</td><td><span class="dot" style="background:#444c69"></span>否</td><td>2025-09-10 15:08:25</td><td><span class="dot" style="background:#18bc9c"></span><span style="color:#18bc9c">正常</span></td><td>-</td><td><div style="position:relative;height:22px;width:192px;margin-left:69px"><div class="xb" style="left:0;width:60px;background:#1688f1">调整余额</div><div class="xb" style="left:64px;width:36px;background:#f75444">设置</div><div class="xb" style="left:104px;width:36px;background:#f39c12">报表</div><div class="xb" style="left:144px;width:22px;background:#18bc9c"><div class="abs" style="left:5.5px;top:5.3px;"><svg width="11" height="11" viewBox="0 0 12 12" ><path d="M0.2,11.8 L0.6,8.4 L8.2,0.8 L11.2,3.8 L3.6,11.4 Z" fill="#fff"/></svg></div></div><div class="xb" style="left:170px;width:22px;background:#f75444"><div class="abs" style="left:6px;top:5.5px;"><svg width="10" height="11" viewBox="0 0 10 11" ><rect x="0" y="2.2" width="10" height="1.5" fill="#fff"/><path d="M3,2.4 L3.4,0.6 L6.6,0.6 L7,2.4" fill="none" stroke="#fff" stroke-width="1.1"/><path d="M0.9,3.5 L9.1,3.5 L8.8,11 L1.2,11 Z" fill="#fff"/><rect x="3" y="4.7" width="0.8" height="5.2" fill="#f75444"/><rect x="6.2" y="4.7" width="0.8" height="5.2" fill="#f75444"/></svg></div></div></div></td></tr>
<tr class=""><td><span class="cb"></span></td><td>10005831</td><td>963696924</td><td><span class="av" style="background:#a0cbe3">9</span></td><td>0.40</td><td>100</td><td>aUYTb8</td><td><span class="dot" style="background:#444c69"></span>否</td><td>2025-09-10 14:39:16</td><td><span class="dot" style="background:#18bc9c"></span><span style="color:#18bc9c">正常</span></td><td>-</td><td><div style="position:relative;height:22px;width:192px;margin-left:69px"><div class="xb" style="left:0;width:60px;background:#1688f1">调整余额</div><div class="xb" style="left:64px;width:36px;background:#f75444">设置</div><div class="xb" style="left:104px;width:36px;background:#f39c12">报表</div><div class="xb" style="left:144px;width:22px;background:#18bc9c"><div class="abs" style="left:5.5px;top:5.3px;"><svg width="11" height="11" viewBox="0 0 12 12" ><path d="M0.2,11.8 L0.6,8.4 L8.2,0.8 L11.2,3.8 L3.6,11.4 Z" fill="#fff"/></svg></div></div><div class="xb" style="left:170px;width:22px;background:#f75444"><div class="abs" style="left:6px;top:5.5px;"><svg width="10" height="11" viewBox="0 0 10 11" ><rect x="0" y="2.2" width="10" height="1.5" fill="#fff"/><path d="M3,2.4 L3.4,0.6 L6.6,0.6 L7,2.4" fill="none" stroke="#fff" stroke-width="1.1"/><path d="M0.9,3.5 L9.1,3.5 L8.8,11 L1.2,11 Z" fill="#fff"/><rect x="3" y="4.7" width="0.8" height="5.2" fill="#f75444"/><rect x="6.2" y="4.7" width="0.8" height="5.2" fill="#f75444"/></svg></div></div></div></td></tr>
<tr class="odd"><td><span class="cb"></span></td><td>10005830</td><td>0969073273</td><td><span class="av" style="background:#e3b7a0">0</span></td><td>0.00</td><td>100</td><td>QcjveF</td><td><span class="dot" style="background:#444c69"></span>否</td><td>2025-09-10 12:03:05</td><td><span class="dot" style="background:#18bc9c"></span><span style="color:#18bc9c">正常</span></td><td>-</td><td><div style="position:relative;height:22px;width:192px;margin-left:69px"><div class="xb" style="left:0;width:60px;background:#1688f1">调整余额</div><div class="xb" style="left:64px;width:36px;background:#f75444">设置</div><div class="xb" style="left:104px;width:36px;background:#f39c12">报表</div><div class="xb" style="left:144px;width:22px;background:#18bc9c"><div class="abs" style="left:5.5px;top:5.3px;"><svg width="11" height="11" viewBox="0 0 12 12" ><path d="M0.2,11.8 L0.6,8.4 L8.2,0.8 L11.2,3.8 L3.6,11.4 Z" fill="#fff"/></svg></div></div><div class="xb" style="left:170px;width:22px;background:#f75444"><div class="abs" style="left:6px;top:5.5px;"><svg width="10" height="11" viewBox="0 0 10 11" ><rect x="0" y="2.2" width="10" height="1.5" fill="#fff"/><path d="M3,2.4 L3.4,0.6 L6.6,0.6 L7,2.4" fill="none" stroke="#fff" stroke-width="1.1"/><path d="M0.9,3.5 L9.1,3.5 L8.8,11 L1.2,11 Z" fill="#fff"/><rect x="3" y="4.7" width="0.8" height="5.2" fill="#f75444"/><rect x="6.2" y="4.7" width="0.8" height="5.2" fill="#f75444"/></svg></div></div></div></td></tr>
<tr class=""><td><span class="cb"></span></td><td>10005829</td><td>559504947</td><td><span class="av" style="background:#e3a0cc">5</span></td><td>0.00</td><td>100</td><td>qfN9vZ</td><td><span class="dot" style="background:#444c69"></span>否</td><td>2025-09-09 23:15:41</td><td><span class="dot" style="background:#18bc9c"></span><span style="color:#18bc9c">正常</span></td><td>-</td><td><div style="position:relative;height:22px;width:192px;margin-left:69px"><div class="xb" style="left:0;width:60px;background:#1688f1">调整余额</div><div class="xb" style="left:64px;width:36px;background:#f75444">设置</div><div class="xb" style="left:104px;width:36px;background:#f39c12">报表</div><div class="xb" style="left:144px;width:22px;background:#18bc9c"><div class="abs" style="left:5.5px;top:5.3px;"><svg width="11" height="11" viewBox="0 0 12 12" ><path d="M0.2,11.8 L0.6,8.4 L8.2,0.8 L11.2,3.8 L3.6,11.4 Z" fill="#fff"/></svg></div></div><div class="xb" style="left:170px;width:22px;background:#f75444"><div class="abs" style="left:6px;top:5.5px;"><svg width="10" height="11" viewBox="0 0 10 11" ><rect x="0" y="2.2" width="10" height="1.5" fill="#fff"/><path d="M3,2.4 L3.4,0.6 L6.6,0.6 L7,2.4" fill="none" stroke="#fff" stroke-width="1.1"/><path d="M0.9,3.5 L9.1,3.5 L8.8,11 L1.2,11 Z" fill="#fff"/><rect x="3" y="4.7" width="0.8" height="5.2" fill="#f75444"/><rect x="6.2" y="4.7" width="0.8" height="5.2" fill="#f75444"/></svg></div></div></div></td></tr>
<tr class="odd"><td><span class="cb"></span></td><td>10005828</td><td>968758827</td><td><span class="av" style="background:#a0e3cf">9</span></td><td>40000.60</td><td>100</td><td>Ox8UgI</td><td><span class="dot" style="background:#444c69"></span>否</td><td>2025-09-09 20:58:47</td><td><span class="dot" style="background:#18bc9c"></span><span style="color:#18bc9c">正常</span></td><td>-</td><td><div style="position:relative;height:22px;width:192px;margin-left:69px"><div class="xb" style="left:0;width:60px;background:#1688f1">调整余额</div><div class="xb" style="left:64px;width:36px;background:#f75444">设置</div><div class="xb" style="left:104px;width:36px;background:#f39c12">报表</div><div class="xb" style="left:144px;width:22px;background:#18bc9c"><div class="abs" style="left:5.5px;top:5.3px;"><svg width="11" height="11" viewBox="0 0 12 12" ><path d="M0.2,11.8 L0.6,8.4 L8.2,0.8 L11.2,3.8 L3.6,11.4 Z" fill="#fff"/></svg></div></div><div class="xb" style="left:170px;width:22px;background:#f75444"><div class="abs" style="left:6px;top:5.5px;"><svg width="10" height="11" viewBox="0 0 10 11" ><rect x="0" y="2.2" width="10" height="1.5" fill="#fff"/><path d="M3,2.4 L3.4,0.6 L6.6,0.6 L7,2.4" fill="none" stroke="#fff" stroke-width="1.1"/><path d="M0.9,3.5 L9.1,3.5 L8.8,11 L1.2,11 Z" fill="#fff"/><rect x="3" y="4.7" width="0.8" height="5.2" fill="#f75444"/><rect x="6.2" y="4.7" width="0.8" height="5.2" fill="#f75444"/></svg></div></div></div></td></tr>
<tr class=""><td><span class="cb"></span></td><td>10005827</td><td>0968758827</td><td><span class="av" style="background:#e0a0e0">0</span></td><td>40000.60</td><td>0</td><td>PfeaZi</td><td><span class="dot" style="background:#444c69"></span>否</td><td>2025-09-09 20:40:51</td><td><span class="dot" style="background:#18bc9c"></span><span style="color:#18bc9c">正常</span></td><td>-</td><td><div style="position:relative;height:22px;width:192px;margin-left:69px"><div class="xb" style="left:0;width:60px;background:#1688f1">调整余额</div><div class="xb" style="left:64px;width:36px;background:#f75444">设置</div><div class="xb" style="left:104px;width:36px;background:#f39c12">报表</div><div class="xb" style="left:144px;width:22px;background:#18bc9c"><div class="abs" style="left:5.5px;top:5.3px;"><svg width="11" height="11" viewBox="0 0 12 12" ><path d="M0.2,11.8 L0.6,8.4 L8.2,0.8 L11.2,3.8 L3.6,11.4 Z" fill="#fff"/></svg></div></div><div class="xb" style="left:170px;width:22px;background:#f75444"><div class="abs" style="left:6px;top:5.5px;"><svg width="10" height="11" viewBox="0 0 10 11" ><rect x="0" y="2.2" width="10" height="1.5" fill="#fff"/><path d="M3,2.4 L3.4,0.6 L6.6,0.6 L7,2.4" fill="none" stroke="#fff" stroke-width="1.1"/><path d="M0.9,3.5 L9.1,3.5 L8.8,11 L1.2,11 Z" fill="#fff"/><rect x="3" y="4.7" width="0.8" height="5.2" fill="#f75444"/><rect x="6.2" y="4.7" width="0.8" height="5.2" fill="#f75444"/></svg></div></div></div></td></tr>
</table>
<div class="t" style="left:260px;top:706px;color:#333">显示第 1 到第 10 条记录，总共 419 条记录 每页显示</div>
<div class="abs" style="left:591px;top:701px;width:52px;height:33px;border:1px solid #ddd;border-radius:3px;background:#f4f4f4"></div>
<div class="t" style="left:604px;top:707px;color:#333;font-size:13px">10</div>
<div class="abs" style="left:621px;top:714px;"><svg width="8" height="4.5" viewBox="0 0 8 4.5" ><path d="M0,4.5 L8,4.5 L4,0 Z" fill="#333"/></svg></div>
<div class="t" style="left:648px;top:706px;color:#333">条记录</div>
<div class="pg" style="left:1473px;width:68px;border-radius:4px 0 0 4px;">上一页</div>
<div class="pg" style="left:1540px;width:34px;background:#444c69;border-color:#444c69;color:#fff;">1</div>
<div class="pg" style="left:1573px;width:33px;">2</div>
<div class="pg" style="left:1605px;width:34px;">3</div>
<div class="pg" style="left:1638px;width:34px;">4</div>
<div class="pg" style="left:1671px;width:34px;">5</div>
<div class="pg" style="left:1704px;width:37px;background:#fff;">...</div>
<div class="pg" style="left:1740px;width:42px;">42</div>
<div class="pg" style="left:1781px;width:68px;border-radius:0 4px 4px 0;">下一页</div>
<div class="abs" style="left:1854px;top:699px;width:50px;height:33px;border:1px solid #ccd3dd;background:#fff"></div>
<div class="abs" style="left:1909px;top:700px;width:52px;height:33px;border:1px solid #ddd;border-radius:3px;background:#f4f4f4;color:#333;font-size:13px;line-height:31px;text-align:center">跳转</div>
</body></html>
